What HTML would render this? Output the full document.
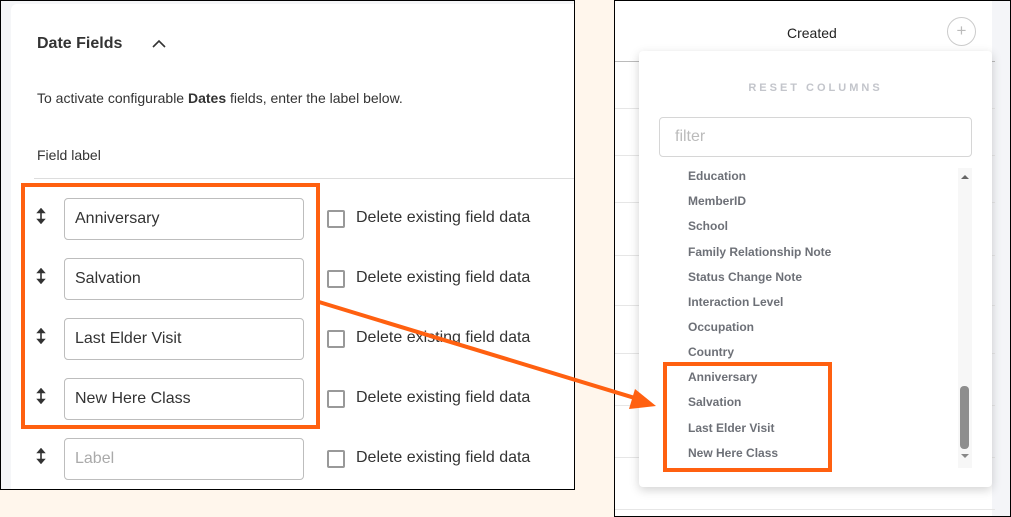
<!DOCTYPE html>
<html><head><meta charset="utf-8"><style>
*{box-sizing:border-box;margin:0;padding:0}
body{width:1011px;height:517px;background:#fff6ec;position:relative;overflow:hidden;font-family:"Liberation Sans",Arial,sans-serif}
.abs{position:absolute}
#left{left:0;top:0;width:575px;height:490px;border:1px solid #000;background:#f5f6f8;overflow:hidden}
#card{left:10px;top:3px;width:570px;height:500px;background:#fff;border-radius:6px}
.t{color:#333}
.inp{position:absolute;left:63px;width:240px;height:42px;border:1px solid #bdbdbd;border-radius:4px;background:#fff;font-size:16px;color:#333;padding:11px 10px;line-height:18px}
.cb{position:absolute;left:326px;width:18px;height:18px;border:2px solid #999;border-radius:2px;background:#fff}
.dl{position:absolute;left:355px;font-size:16px;color:#333}
.hd{position:absolute;left:35px}
#right{left:614px;top:0;width:397px;height:517px;border:1px solid #000;background:#fff;overflow:hidden}
.hl{position:absolute;left:0;width:380px;height:1px;background:#e6e6e6}
#dd{left:639px;top:51px;width:353px;height:436px;background:#fff;border-radius:4px;box-shadow:0 3px 10px rgba(0,0,0,.18)}
.it{position:absolute;left:49px;font-size:12px;font-weight:bold;color:#6d7077}
</style></head><body>
<div id="left" class="abs">
  <div id="card" class="abs"></div>
  <div class="abs t" style="left:36px;top:34px;font-size:16px;font-weight:bold">Date Fields</div>
  <svg class="abs" style="left:150px;top:37px" width="16" height="12"><path d="M2 9 L8 3 L14 9" fill="none" stroke="#333" stroke-width="1.6"/></svg>
  <div class="abs t" style="left:36px;top:89px;font-size:14px">To activate configurable <b>Dates</b> fields, enter the label below.</div>
  <div class="abs t" style="left:36px;top:146px;font-size:14px">Field label</div>
  <div class="abs" style="left:33px;top:177px;width:545px;height:1px;background:#ddd"></div>
  <svg class="hd" style="top:207px" width="10" height="16"><path d="M5 2V14M2 4.5L5 1L8 4.5ZM2 11.5L5 15L8 11.5Z" stroke="#333" stroke-width="1.6" fill="#333"/></svg>
  <svg class="hd" style="top:267px" width="10" height="16"><path d="M5 2V14M2 4.5L5 1L8 4.5ZM2 11.5L5 15L8 11.5Z" stroke="#333" stroke-width="1.6" fill="#333"/></svg>
  <svg class="hd" style="top:327px" width="10" height="16"><path d="M5 2V14M2 4.5L5 1L8 4.5ZM2 11.5L5 15L8 11.5Z" stroke="#333" stroke-width="1.6" fill="#333"/></svg>
  <svg class="hd" style="top:387px" width="10" height="16"><path d="M5 2V14M2 4.5L5 1L8 4.5ZM2 11.5L5 15L8 11.5Z" stroke="#333" stroke-width="1.6" fill="#333"/></svg>
  <svg class="hd" style="top:447px" width="10" height="16"><path d="M5 2V14M2 4.5L5 1L8 4.5ZM2 11.5L5 15L8 11.5Z" stroke="#333" stroke-width="1.6" fill="#333"/></svg>
  <div class="inp" style="top:197px">Anniversary</div>
  <div class="inp" style="top:257px">Salvation</div>
  <div class="inp" style="top:317px">Last Elder Visit</div>
  <div class="inp" style="top:377px">New Here Class</div>
  <div class="inp" style="top:437px;color:#aaa">Label</div>
  <div class="cb" style="top:209px"></div><div class="dl" style="top:208px">Delete existing field data</div>
  <div class="cb" style="top:269px"></div><div class="dl" style="top:268px">Delete existing field data</div>
  <div class="cb" style="top:329px"></div><div class="dl" style="top:328px">Delete existing field data</div>
  <div class="cb" style="top:389px"></div><div class="dl" style="top:388px">Delete existing field data</div>
  <div class="cb" style="top:449px"></div><div class="dl" style="top:448px">Delete existing field data</div>
  <div class="abs" style="left:20px;top:182px;width:299px;height:246px;border:4px solid #ff6010"></div>
</div>
<div id="right" class="abs">
  <div class="abs" style="left:377px;top:0;width:20px;height:517px;background:#f4f5f8"></div>
  <div class="abs" style="left:172px;top:24px;font-size:14px;color:#222">Created</div>
  <div class="abs" style="left:332px;top:16px;width:29px;height:29px;border:1.5px solid #ccc;border-radius:50%;color:#bbb;text-align:center;font-size:17px;line-height:25px">+</div>
  <div class="hl" style="top:60px;background:#bbb"></div>
  <div class="hl" style="top:107px"></div>
  <div class="hl" style="top:154px"></div>
  <div class="hl" style="top:201px"></div>
  <div class="hl" style="top:254px"></div>
  <div class="hl" style="top:304px"></div>
  <div class="hl" style="top:352px"></div>
  <div class="hl" style="top:404px"></div>
  <div class="hl" style="top:456px"></div>
  <div class="hl" style="top:508px"></div>
</div>
<div id="dd" class="abs">
  <div class="abs" style="left:0;width:353px;top:31px;text-align:center;font-size:11px;font-weight:bold;letter-spacing:3px;color:#c3c5cb">RESET COLUMNS</div>
  <div class="abs" style="left:20px;top:66px;width:313px;height:40px;border:1px solid #d6d6d6;border-radius:4px;font-size:16px;color:#bbb;padding:10px 15px">filter</div>
  <div class="abs" style="left:319px;top:117px;width:14px;height:300px;background:#f7f7f7"></div>
  <svg class="abs" style="left:320px;top:121px" width="12" height="8"><path d="M2 7 L6 3 L10 7Z" fill="#666"/></svg>
  <svg class="abs" style="left:320px;top:401px" width="12" height="8"><path d="M2 2 L6 6 L10 2Z" fill="#888"/></svg>
  <div class="abs" style="left:321px;top:335px;width:9px;height:63px;background:#8e8e8e;border-radius:4px"></div>
  <div class="it" style="top:118px">Education</div>
  <div class="it" style="top:143px">MemberID</div>
  <div class="it" style="top:168px">School</div>
  <div class="it" style="top:194px">Family Relationship Note</div>
  <div class="it" style="top:219px">Status Change Note</div>
  <div class="it" style="top:244px">Interaction Level</div>
  <div class="it" style="top:269px">Occupation</div>
  <div class="it" style="top:294px">Country</div>
  <div class="it" style="top:319px">Anniversary</div>
  <div class="it" style="top:344px">Salvation</div>
  <div class="it" style="top:370px">Last Elder Visit</div>
  <div class="it" style="top:395px">New Here Class</div>
  <div class="abs" style="left:24px;top:311px;width:169px;height:110px;border:4px solid #ff6010"></div>
</div>
<svg class="abs" style="left:0;top:0" width="1011" height="517">
  <line x1="319" y1="302" x2="638" y2="399" stroke="#ff6010" stroke-width="4"/>
  <path d="M656 406 L635 389 L629 409 Z" fill="#ff6010"/>
</svg>
</body></html>
